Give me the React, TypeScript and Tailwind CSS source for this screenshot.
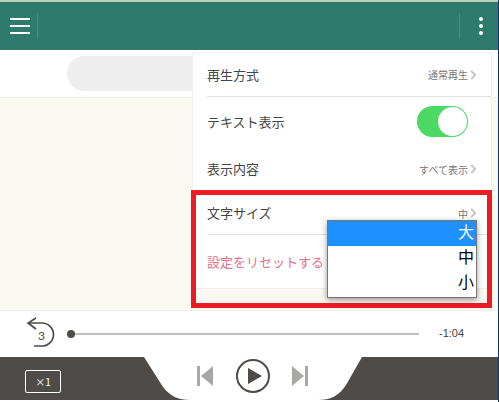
const FONT = "font-['Noto_Sans_CJK_JP','Noto_Sans',sans-serif]";

function Chevron() {
  return (
    <svg width="7" height="10" viewBox="0 0 7 10" className="ml-[2px]">
      <path d="M1.2 1 5.2 5 1.2 9" fill="none" stroke="#c4c4c4" strokeWidth="1.8" />
    </svg>
  );
}

function SettingRow({ label, value, className }: { label: string; value: string; className: string }) {
  return (
    <div className={`flex items-center justify-between pr-[14px] ${className}`}>
      <span className="text-[13px] text-[#444]">{label}</span>
      <span className="flex items-center text-[10px] text-[#777]">
        {value}
        <Chevron />
      </span>
    </div>
  );
}

function Header() {
  return (
    <header className="flex h-[48px] items-center justify-between bg-[#2e7b6b]">
      <div className="flex items-center">
        <div className="ml-[10px] flex w-[20px] flex-col gap-[5px]">
          <div className="h-[2px] bg-white" />
          <div className="h-[2px] bg-white" />
          <div className="h-[2px] bg-white" />
        </div>
        <div className="ml-[7px] h-[26px] w-px bg-[#4b8e80]" />
      </div>
      <div className="flex items-center">
        <div className="h-[26px] w-px bg-[#4b8e80]" />
        <div className="mr-[15px] ml-[19px] flex flex-col gap-[3px]">
          <div className="size-[4px] rounded-full bg-white" />
          <div className="size-[4px] rounded-full bg-white" />
          <div className="size-[4px] rounded-full bg-white" />
        </div>
      </div>
    </header>
  );
}

function SettingsPanel() {
  return (
    <div className="absolute top-[2px] left-[192px] w-[300px] border border-[#f0f0f0] bg-white pl-[14px]">
      <SettingRow label="再生方式" value="通常再生" className="h-[43px] border-b-0" />
      <div className="h-px bg-[#e2e2e2]" />
      <div className="flex h-[49px] items-center justify-between pr-[23px]">
        <span className="text-[13px] text-[#444]">テキスト表示</span>
        <div className="flex h-[31px] w-[51px] items-center justify-end rounded-full bg-[#4cd964] pr-px">
          <div className="size-[29px] rounded-full bg-white" />
        </div>
      </div>
      <SettingRow label="表示内容" value="すべて表示" className="h-[46px]" />
      <SettingRow label="文字サイズ" value="中" className="h-[42px]" />
      <div className="h-px bg-[#e2e2e2]" />
      <div className="flex h-[53px] items-center text-[13px] text-[#ea7088]">設定をリセットする</div>
    </div>
  );
}

function SizeDropdown() {
  return (
    <div className="absolute top-[170px] left-[327px] w-[150px] border border-[#767676] bg-white pb-[1px] text-right text-[16px] text-black shadow-[0_2px_6px_rgba(0,0,0,0.4)]">
      <div className="h-[25px] bg-[#1e90ff] pr-[2px] leading-[21px] text-white">大</div>
      <div className="h-[25px] pr-[2px] leading-[21px]">中</div>
      <div className="h-[25px] pr-[2px] leading-[21px]">小</div>
    </div>
  );
}

function Player() {
  return (
    <div className="flex h-[47px] items-center border-t border-[#eeeeee] bg-white">
      <svg width="32" height="36" viewBox="0 0 32 36" className="ml-[25px]">
        <path d="M3 7H17a11.500 11.500 0 0 1 0 23H9" fill="none" stroke="#4f4b48" strokeWidth="1.7" />
        <path d="M11 2 3 7 11 13" fill="none" stroke="#4f4b48" strokeWidth="1.7" />
        <text x="13" y="23.500" fontSize="12" fill="#4f4b48" fontFamily="Lato, sans-serif">3</text>
      </svg>
      <div className="ml-[10px] size-[8px] rounded-full bg-[#4f4b48]" />
      <div className="h-[2px] w-[344px] bg-[#bfbfbf]" />
      <span className="mb-[2px] ml-[20px] font-['Liberation_Sans',sans-serif] text-[11px] text-[#444]">-1:04</span>
    </div>
  );
}

function Controls() {
  return (
    <div className="relative flex h-[43px] items-center bg-[#4f4b48]">
      <svg width="498" height="43" viewBox="0 0 498 43" className="absolute inset-0">
        <path d="M144 0H362L346 28C339 39 330 43 318 43H190C178 43 170 39 163 30Z" fill="#fff" />
      </svg>
      <div className="relative mt-[6px] ml-[25px] flex h-[23px] w-[36px] items-center justify-center rounded-[2px] border border-white text-[10px] text-white">×1</div>
      <div className="relative mb-[6px] ml-[136px] flex items-center">
        <svg width="17" height="20" viewBox="0 0 17 20">
          <path d="M0 0h3v20H0zM16 0v20L4 10z" fill="#a9a8a6" />
        </svg>
        <svg width="36" height="36" viewBox="0 0 36 36" className="ml-[21px]">
          <circle cx="18" cy="18" r="16" fill="none" stroke="#4f4b48" strokeWidth="2" />
          <path d="M13 10 27 18 13 26z" fill="#4f4b48" />
        </svg>
        <svg width="17" height="20" viewBox="0 0 17 20" className="ml-[21px]">
          <path d="M0 0 12 10 0 20zM13 0h3v20h-3z" fill="#a9a8a6" />
        </svg>
      </div>
    </div>
  );
}

export default function App() {
  return (
    <div className={`flex h-[402px] w-[499px] overflow-hidden bg-white ${FONT}`}>
      <div className="flex w-[498px] flex-col">
        <div className="h-[2px] bg-[#b9d1b5]" />
        <Header />
        <main className="relative h-[260px] bg-[#f9f9f1]">
          <div className="flex h-[48px] items-center border-b border-[#eeeeee] bg-white pl-[67px]">
            <div className="h-[35px] w-[200px] rounded-full bg-[#eeeeee]" />
          </div>
          <SettingsPanel />
          <div className="absolute top-[140px] left-[191px] h-[118px] w-[301px] border-[5px] border-[#ed1c24]" />
          <SizeDropdown />
        </main>
        <Player />
        <Controls />
      </div>
      <div className="w-px bg-[#1c3160]" />
    </div>
  );
}
